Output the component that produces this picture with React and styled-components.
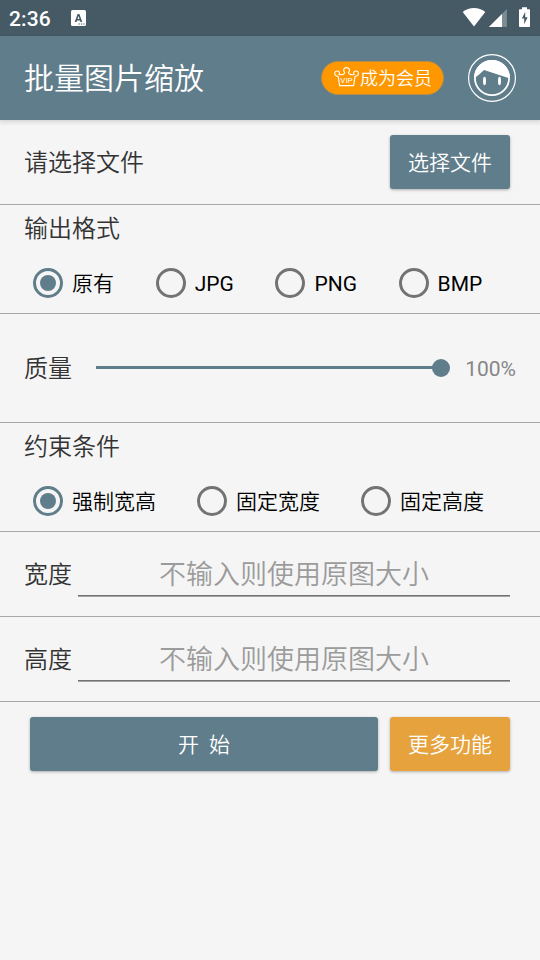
import React, { useState } from 'react';
import styled, { createGlobalStyle } from 'styled-components';

const App = () => {
  const [format, setFormat] = useState('原有');
  const [limit, setLimit] = useState('强制宽高');

  return (
    <Screen>
      <GlobalStyle />
      <StatusBar>
        <Clock>2:36</Clock>
        <KeyboardIcon />
        <StatusIcons />
      </StatusBar>

      <Toolbar>
        <Title>批量图片缩放</Title>
        <VipButton>
          <CrownIcon />
          <span>成为会员</span>
        </VipButton>
        <AvatarIcon />
      </Toolbar>

      <Row>
        <Label>请选择文件</Label>
        <PickButton>选择文件</PickButton>
      </Row>

      <Section>
        <SectionTitle>输出格式</SectionTitle>
        <RadioGroup $gap={41.65}>
          {['原有', 'JPG', 'PNG', 'BMP'].map((name) => (
            <Radio key={name} onClick={() => setFormat(name)}>
              <RadioMark $checked={format === name} />
              <RadioText $latin={name !== '原有'}>{name}</RadioText>
            </Radio>
          ))}
        </RadioGroup>
      </Section>

      <Row $tall>
        <Label>质量</Label>
        <Slider>
          <Track />
          <Thumb />
        </Slider>
        <Percent>100%</Percent>
      </Row>

      <Section>
        <SectionTitle>约束条件</SectionTitle>
        <RadioGroup $gap={41}>
          {['强制宽高', '固定宽度', '固定高度'].map((name) => (
            <Radio key={name} onClick={() => setLimit(name)}>
              <RadioMark $checked={limit === name} />
              <RadioText>{name}</RadioText>
            </Radio>
          ))}
        </RadioGroup>
      </Section>

      <Row>
        <Label>宽度</Label>
        <SizeInput placeholder="不输入则使用原图大小" />
      </Row>
      <Row>
        <Label>高度</Label>
        <SizeInput placeholder="不输入则使用原图大小" />
      </Row>

      <Actions>
        <StartButton>开&nbsp; 始</StartButton>
        <MoreButton>更多功能</MoreButton>
      </Actions>
    </Screen>
  );
};

// Icons
const KeyboardIcon = () => (
  <svg width="16" height="16" viewBox="0 0 16 16">
    <rect x="0" y="0" width="15" height="16" rx="1.6" fill="#fff" />
    <path d="M3.7 12 6.600 4h1.800l2.900 8H9.500l-.5-1.600H6L5.500 12zM6.500 9h2l-1-3.100z" fill="#455a64" />
    <path d="M7.500 13.400h1.300v1.200H7.500zM9.900 13.400h1.300v1.200H9.900zM12.300 13.400h1.300v1.200h-1.300z" fill="#455a64" />
  </svg>
);

const StatusIcons = () => (
  <StatusSvg width="70" height="24" viewBox="0 0 70 24">
    <path d="M.7 6.100C3.900 3.400 8 2 12 2s8.100 1.400 11.300 4.100L12 20.500z" fill="#fff" />
    <path d="M44.900 3v18h-18z" fill="#fff" fillOpacity="0.3" />
    <path d="M40 7.900V21H26.900z" fill="#fff" />
    <path d="M60 1.300h5v2h2.300c.4 0 .7.300.7.700v16.300c0 .4-.3.700-.7.700h-9.600a.7.700 0 0 1-.7-.7V4c0-.4.300-.7.700-.7H60z" fill="#fff" />
    <path d="M63.200 5.800 59.900 12.600h2.300v5.600l3.400-7h-2.400z" fill="#455a64" />
  </StatusSvg>
);

const CrownIcon = () => (
  <svg width="26" height="20" viewBox="0 0 26 20">
    <path
      d="M5.600 18.600 4.200 9.300C1.800 9.500.6 7.700.7 6 .9 3.700 4.800 3.300 5.500 5.500c.3 1-.2 1.500-.6 1.900 1.800.8 5.300.4 5.900-1.800C8.500 3.400 9.900.6 12.600.6s4.100 2.800 1.800 5c.6 2.200 4.100 2.600 5.900 1.800-.4-.4-.9-.9-.6-1.900.7-2.200 4.600-1.800 4.800.5.100 1.700-1.100 3.500-3.500 3.300l-1.400 9.300z"
      fill="none"
      stroke="#fff"
      strokeWidth="1.1"
      strokeLinejoin="round"
    />
    <text x="12.500" y="15.700" textAnchor="middle" fontFamily="Roboto, sans-serif" fontSize="8" fontWeight="400" fill="#fff">VIP</text>
  </svg>
);

const AvatarIcon = () => (
  <svg width="48" height="48" viewBox="0 0 48 48">
    <circle cx="24" cy="24" r="23.4" fill="none" stroke="#fff" strokeWidth="1.2" />
    <circle cx="24" cy="24" r="17.1" fill="none" stroke="#fff" strokeWidth="1.8" />
    <path d="M6 24.400C6 14 14 6 24 6s18 8 18 18.600L16 16Q12.500 19.800 6 24.400z" fill="#fff" />
    <ellipse cx="16.500" cy="27" rx="1.500" ry="4.200" fill="#fff" />
    <ellipse cx="31.500" cy="27" rx="1.500" ry="4.200" fill="#fff" />
  </svg>
);

// Styled components
const GlobalStyle = createGlobalStyle`
  * {
    box-sizing: border-box;
  }

  body {
    margin: 0;
    background: #f5f5f5;
    font-family: Roboto, "Noto Sans CJK SC", sans-serif;
  }

  button, input {
    font-family: inherit;
  }
`;

const Screen = styled.div`
  display: flex;
  flex-direction: column;
  width: 540px;
  height: 960px;
  overflow: hidden;
  background: #f5f5f5;
`;

const StatusBar = styled.div`
  display: flex;
  align-items: center;
  flex: none;
  height: 36px;
  padding: 0 8px 0 9px;
  background: #455a64;
`;

const Clock = styled.span`
  width: 62px;
  padding-top: 2px;
  color: #fff;
  font-size: 21px;
  font-weight: 500;
  letter-spacing: 0.1px;
  line-height: 24px;
`;

const StatusSvg = styled.svg`
  margin-left: auto;
`;

const Toolbar = styled.header`
  display: flex;
  align-items: center;
  flex: none;
  height: 84px;
  padding: 0 24px;
  background: #607d8b;
  box-shadow: 0 1px 3px rgba(0, 0, 0, 0.12), 0 5px 0 rgba(0, 0, 0, 0.03);
`;

const Title = styled.h1`
  flex: 1;
  margin: 0;
  padding-bottom: 4px;
  color: #fff;
  font-size: 30px;
  font-weight: 350;
`;

const VipButton = styled.button`
  display: flex;
  align-items: center;
  width: 123px;
  height: 34px;
  margin-right: 24px;
  margin-bottom: 1px;
  padding: 0 0 1px 12px;
  border: 1px solid #b88d48;
  border-radius: 17px;
  background: #ff9800;
  color: #fff;
  font-size: 18px;
  font-weight: 350;
  white-space: nowrap;
`;

const Row = styled.div`
  display: flex;
  align-items: center;
  flex: none;
  height: ${(props) => (props.$tall ? 109 : 85)}px;
  padding: 0 ${(props) => (props.$tall ? 24 : 30)}px 0 24px;
  border-bottom: 1px solid #a9a9a9;
`;

const Label = styled.span`
  flex: none;
  padding-top: 2px;
  color: #333;
  font-size: 24px;
  font-weight: 350;
  line-height: 36px;
`;

const Button = styled.button`
  height: 54px;
  padding: 0 0 2px;
  border: 0;
  border-radius: 3px;
  background: #607d8b;
  box-shadow: 0 1px 3px rgba(0, 0, 0, 0.3);
  color: #fff;
  font-size: 21px;
  font-weight: 350;
`;

const PickButton = styled(Button)`
  width: 120px;
  margin-left: auto;
`;

const Section = styled.section`
  flex: none;
  height: 109px;
  border-bottom: 1px solid #a9a9a9;
`;

const SectionTitle = styled.h2`
  margin: 0;
  padding: 6px 24px 0;
  color: #333;
  font-size: 24px;
  font-weight: 350;
  line-height: 36px;
`;

const RadioGroup = styled.div`
  display: flex;
  gap: ${(props) => props.$gap}px;
  padding: 20px 33px 0;
`;

const Radio = styled.div`
  display: flex;
  align-items: center;
  gap: 9px;
  height: 32px;
  color: #000;
  font-size: 21px;
  white-space: nowrap;
`;

const RadioText = styled.span`
  padding-top: 2px;
  font-weight: ${(props) => (props.$latin ? 400 : 350)};
  line-height: 32px;
`;

const RadioMark = styled.span`
  display: grid;
  place-items: center;
  width: 30px;
  height: 30px;
  border: 3px solid ${(props) => (props.$checked ? '#607d8b' : '#737373')};
  border-radius: 50%;

  &::after {
    content: '';
    width: 16px;
    height: 16px;
    border-radius: 50%;
    background: ${(props) => (props.$checked ? '#607d8b' : 'transparent')};
  }
`;

const Slider = styled.div`
  display: flex;
  align-items: center;
  flex: 1;
  margin: 0 15.7px 1px 24px;
`;

const Track = styled.div`
  flex: 1;
  height: 3px;
  margin-right: -9px;
  background: #607d8b;
`;

const Thumb = styled.div`
  width: 18px;
  height: 18px;
  border-radius: 50%;
  background: #607d8b;
`;

const Percent = styled.span`
  padding-top: 1px;
  color: #868686;
  font-size: 21px;
`;

const SizeInput = styled.input`
  flex: 1;
  min-width: 0;
  height: 45px;
  margin: 0 0 0 6px;
  padding: 4px 0 1px;
  border: 0;
  border-bottom: 1px solid #a3a3a3;
  box-shadow: inset 0 -1px 0 #737373;
  background: transparent;
  font-size: 27px;
  font-weight: 350;
  text-align: center;
  outline: none;

  &::placeholder {
    color: #9b9b9b;
  }
`;

const Actions = styled.div`
  display: flex;
  gap: 12px;
  padding: 15px 30px;
`;

const StartButton = styled(Button)`
  flex: 1;
`;

const MoreButton = styled(Button)`
  width: 120px;
  background: #e6a23c;
`;

export default App;
